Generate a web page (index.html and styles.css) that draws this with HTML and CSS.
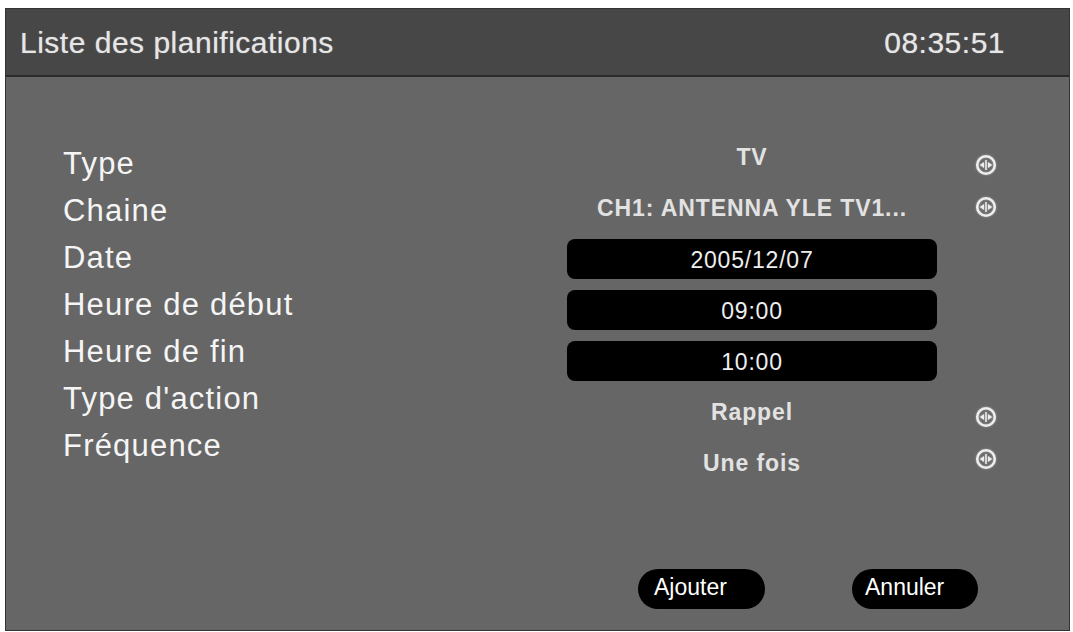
FILE: index.html
```html
<!DOCTYPE html>
<html lang="fr">
<head>
<meta charset="utf-8">
<title>Liste des planifications</title>
<link rel="stylesheet" href="styles.css">
</head>
<body>
<div class="frame">
  <header class="titlebar">
    <span class="title">Liste des planifications</span>
    <span class="clock">08:35:51</span>
  </header>
  <main class="panel">
    <div class="form">
      <ul class="labels">
        <li>Type</li>
        <li>Chaine</li>
        <li>Date</li>
        <li>Heure de début</li>
        <li>Heure de fin</li>
        <li>Type d'action</li>
        <li>Fréquence</li>
      </ul>
      <ul class="values">
        <li class="val">TV</li>
        <li class="val">CH1: ANTENNA YLE TV1...</li>
        <li class="box">2005/12/07</li>
        <li class="box">09:00</li>
        <li class="box">10:00</li>
        <li class="val">Rappel</li>
        <li class="val">Une fois</li>
      </ul>
      <div class="icons">
        <div class="slot"><svg class="lr" viewBox="0 0 20 20"><circle cx="10" cy="10" r="8"/><path class="fill" d="M4.3 10 L8.2 7.2 L8.2 12.8 Z M15.7 10 L11.8 7.2 L11.8 12.8 Z"/><path class="bar" d="M10 5.5 V14.5"/></svg></div>
        <div class="slot"><svg class="lr" viewBox="0 0 20 20"><circle cx="10" cy="10" r="8"/><path class="fill" d="M4.3 10 L8.2 7.2 L8.2 12.8 Z M15.7 10 L11.8 7.2 L11.8 12.8 Z"/><path class="bar" d="M10 5.5 V14.5"/></svg></div>
        <div class="spacer"></div>
        <div class="slot"><svg class="lr" viewBox="0 0 20 20"><circle cx="10" cy="10" r="8"/><path class="fill" d="M4.3 10 L8.2 7.2 L8.2 12.8 Z M15.7 10 L11.8 7.2 L11.8 12.8 Z"/><path class="bar" d="M10 5.5 V14.5"/></svg></div>
        <div class="slot"><svg class="lr" viewBox="0 0 20 20"><circle cx="10" cy="10" r="8"/><path class="fill" d="M4.3 10 L8.2 7.2 L8.2 12.8 Z M15.7 10 L11.8 7.2 L11.8 12.8 Z"/><path class="bar" d="M10 5.5 V14.5"/></svg></div>
      </div>
    </div>
    <div class="actions">
      <button class="btn btn-add">Ajouter</button>
      <button class="btn btn-cancel">Annuler</button>
    </div>
  </main>
</div>
</body>
</html>
```

FILE: styles.css
```css
* { box-sizing: border-box; }

html, body {
  margin: 0;
  padding: 0;
  background: #ffffff;
}

body {
  font-family: "Liberation Sans", Arial, Helvetica, sans-serif;
  padding: 8px 3px 1px 5px;
}

.frame {
  width: 1065px;
  height: 623px;
  border: 1px solid #333333;
  display: flex;
  flex-direction: column;
  background: #666666;
}

.titlebar {
  height: 68px;
  background: #474747;
  border-bottom: 2px solid #2b2b2b;
  display: flex;
  align-items: center;
  justify-content: space-between;
  padding: 2px 64px 0 14px;
  color: #e6e6e6;
  font-size: 30px;
  letter-spacing: 0.5px;
  text-shadow: 0 0 1px rgba(255, 255, 255, 0.5);
}

.panel {
  flex: 1;
  display: flex;
  flex-direction: column;
  padding: 0 0 21px 57px;
}

.form {
  display: flex;
  align-items: flex-start;
}

.labels, .values {
  list-style: none;
  margin: 0;
  padding: 0;
}

.labels {
  width: 504px;
  padding-top: 63px;
  color: #f5f5f5;
  font-size: 31px;
  line-height: 47px;
  letter-spacing: 1.2px;
}

.values {
  width: 370px;
  padding-top: 60px;
  display: flex;
  flex-direction: column;
  gap: 11px;
}

.values li {
  height: 40px;
  line-height: 40px;
  text-align: center;
  font-size: 23px;
}

.val {
  color: #e2e2e2;
  font-weight: bold;
  letter-spacing: 0.9px;
}

.box {
  background: #000000;
  color: #eeeeee;
  border-radius: 8px;
  padding-top: 1px;
  letter-spacing: 0.8px;
}

.icons {
  margin-left: 38px;
  padding-top: 67px;
  display: flex;
  flex-direction: column;
}

.slot {
  height: 42px;
  display: flex;
  align-items: center;
}

.spacer { height: 168px; }

.lr {
  flex: none;
  width: 22px;
  height: 22px;
  fill: none;
  stroke: #eeeeee;
  stroke-width: 2.3;
  filter: drop-shadow(0 0 1px rgba(255, 255, 255, 0.4));
}

.lr .fill {
  fill: #eeeeee;
  stroke: none;
}

.lr .bar { stroke-width: 1.4; }

.actions {
  margin-top: auto;
  display: flex;
  gap: 87px;
  padding-left: 575px;
}

.btn {
  width: 127px;
  height: 40px;
  border: none;
  border-radius: 20px;
  background: #000000;
  color: #ffffff;
  font-family: "Liberation Sans", Arial, Helvetica, sans-serif;
  font-size: 23px;
  text-align: left;
  padding: 0 0 4px 16px;
}

.btn-cancel { padding-left: 13px; width: 126px; }
```
